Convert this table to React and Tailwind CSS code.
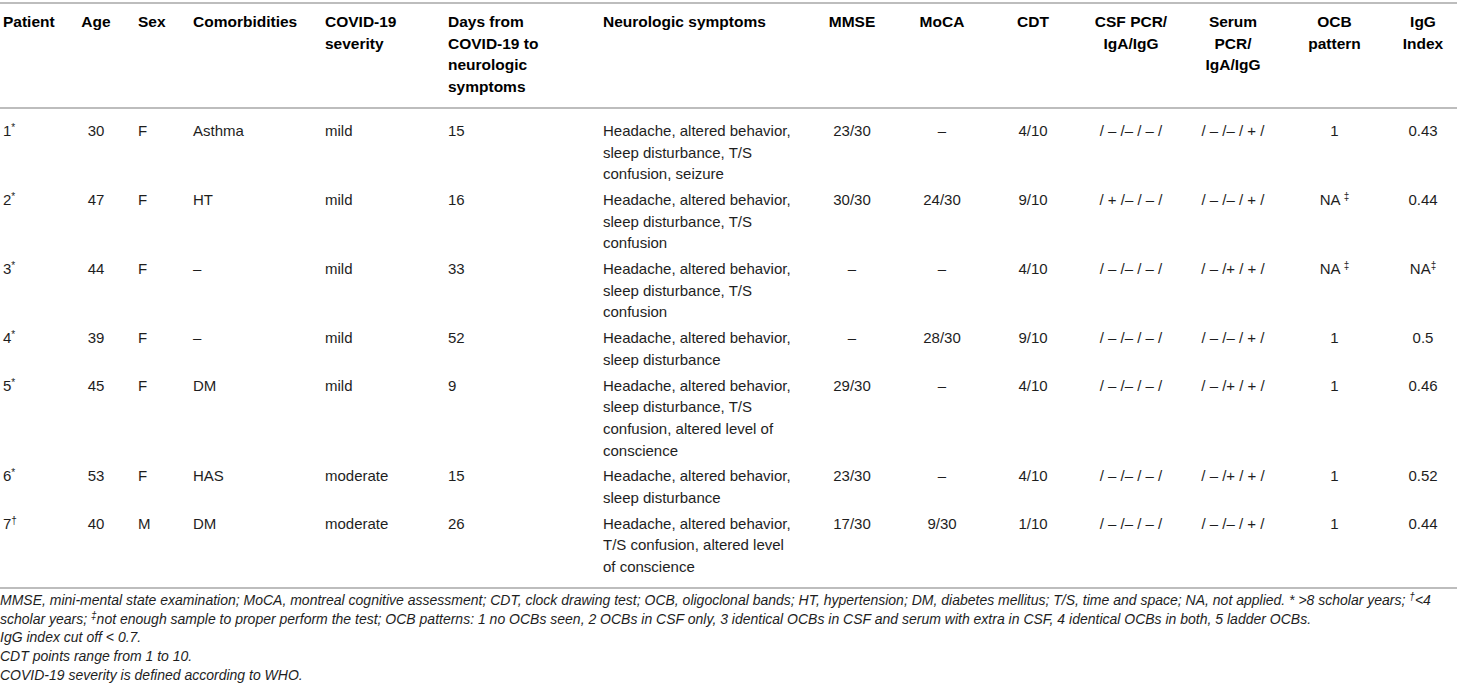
import React from "react";

const cols = [
  { w: "w-[57px]", align: "text-left" },
  { w: "w-[78px]", align: "text-center" },
  { w: "w-[55px]", align: "text-left" },
  { w: "w-[132px]", align: "text-left" },
  { w: "w-[123px]", align: "text-left" },
  { w: "w-[155px]", align: "text-left" },
  { w: "w-[210px]", align: "text-left" },
  { w: "w-[84px]", align: "text-center" },
  { w: "w-[96px]", align: "text-center" },
  { w: "w-[86px]", align: "text-center" },
  { w: "w-[110px]", align: "text-center" },
  { w: "w-[94px]", align: "text-center" },
  { w: "w-[109px]", align: "text-center" },
  { w: "w-[68px]", align: "text-center" },
];

const headers = [
  ["Patient"],
  ["Age"],
  ["Sex"],
  ["Comorbidities"],
  ["COVID-19", "severity"],
  ["Days from", "COVID-19 to", "neurologic", "symptoms"],
  ["Neurologic symptoms"],
  ["MMSE"],
  ["MoCA"],
  ["CDT"],
  ["CSF PCR/", "IgA/IgG"],
  ["Serum", "PCR/", "IgA/IgG"],
  ["OCB", "pattern"],
  ["IgG", "Index"],
];

const Sup = ({ children }) => (
  <span className="text-[10px] leading-none align-[5px]">{children}</span>
);

const rows = [
  {
    p: ["1", "*"], age: "30", sex: "F", com: "Asthma", sev: "mild", days: "15",
    neuro: ["Headache, altered behavior,", "sleep disturbance, T/S", "confusion, seizure"],
    mmse: "23/30", moca: "–", cdt: "4/10", csf: "/ – /– / – /", ser: "/ – /– / + /",
    ocb: "1", igg: "0.43",
  },
  {
    p: ["2", "*"], age: "47", sex: "F", com: "HT", sev: "mild", days: "16",
    neuro: ["Headache, altered behavior,", "sleep disturbance, T/S", "confusion"],
    mmse: "30/30", moca: "24/30", cdt: "9/10", csf: "/ + /– / – /", ser: "/ – /– / + /",
    ocb: <>NA <Sup>‡</Sup></>, igg: "0.44",
  },
  {
    p: ["3", "*"], age: "44", sex: "F", com: "–", sev: "mild", days: "33",
    neuro: ["Headache, altered behavior,", "sleep disturbance, T/S", "confusion"],
    mmse: "–", moca: "–", cdt: "4/10", csf: "/ – /– / – /", ser: "/ – /+ / + /",
    ocb: <>NA <Sup>‡</Sup></>, igg: <>NA<Sup>‡</Sup></>,
  },
  {
    p: ["4", "*"], age: "39", sex: "F", com: "–", sev: "mild", days: "52",
    neuro: ["Headache, altered behavior,", "sleep disturbance"],
    mmse: "–", moca: "28/30", cdt: "9/10", csf: "/ – /– / – /", ser: "/ – /– / + /",
    ocb: "1", igg: "0.5",
  },
  {
    p: ["5", "*"], age: "45", sex: "F", com: "DM", sev: "mild", days: "9",
    neuro: ["Headache, altered behavior,", "sleep disturbance, T/S", "confusion, altered level of", "conscience"],
    mmse: "29/30", moca: "–", cdt: "4/10", csf: "/ – /– / – /", ser: "/ – /+ / + /",
    ocb: "1", igg: "0.46",
  },
  {
    p: ["6", "*"], age: "53", sex: "F", com: "HAS", sev: "moderate", days: "15",
    neuro: ["Headache, altered behavior,", "sleep disturbance"],
    mmse: "23/30", moca: "–", cdt: "4/10", csf: "/ – /– / – /", ser: "/ – /+ / + /",
    ocb: "1", igg: "0.52",
  },
  {
    p: ["7", "†"], age: "40", sex: "M", com: "DM", sev: "moderate", days: "26",
    neuro: ["Headache, altered behavior,", "T/S confusion, altered level", "of conscience"],
    mmse: "17/30", moca: "9/30", cdt: "1/10", csf: "/ – /– / – /", ser: "/ – /– / + /",
    ocb: "1", igg: "0.44",
  },
];

export default function App() {
  return (
    <div
      className="w-[1457px] h-[697px] bg-white pt-[2px] overflow-hidden"
      style={{ fontFamily: '"Liberation Sans", Arial, Helvetica, sans-serif' }}
    >
      <table className="table-fixed w-[1457px] border-collapse text-[15px] leading-[21.7px] text-[#1e1e1e]">
        <colgroup>
          {cols.map((c, i) => (
            <col key={i} className={c.w} />
          ))}
        </colgroup>
        <thead>
          <tr className="border-t-2 border-b-2 border-[#bdbdbd]">
            {headers.map((h, i) => (
              <th
                key={i}
                className={`${cols[i].align} align-top font-bold text-[15.5px] text-black px-[3px] pt-[7px] pb-[9px] whitespace-nowrap`}
              >
                {h.map((line, j) => (
                  <div key={j}>{line}</div>
                ))}
              </th>
            ))}
          </tr>
        </thead>
        <tbody>
          {rows.map((r, ri) => {
            const first = ri === 0;
            const last = ri === rows.length - 1;
            const pad = first
              ? "pt-[11px] pb-[2px]"
              : last
              ? "pt-[2px] pb-[9px]"
              : "pt-[2px] pb-[2px]";
            const cells = [
              <>
                {r.p[0]}
                <Sup>{r.p[1]}</Sup>
              </>,
              r.age,
              r.sex,
              r.com,
              r.sev,
              r.days,
              r.neuro.map((l, k) => <div key={k}>{l}</div>),
              r.mmse,
              r.moca,
              r.cdt,
              r.csf,
              r.ser,
              r.ocb,
              r.igg,
            ];
            return (
              <tr key={ri} className={last ? "border-b-2 border-[#bdbdbd]" : ""}>
                {cells.map((c, ci) => (
                  <td
                    key={ci}
                    className={`${cols[ci].align} align-top px-[3px] ${pad} whitespace-nowrap`}
                  >
                    {c}
                  </td>
                ))}
              </tr>
            );
          })}
        </tbody>
      </table>
      <div className="pt-[2px] text-[14px] leading-[18.7px] italic text-[#1e1e1e]">
        <p>
          MMSE, mini-mental state examination; MoCA, montreal cognitive assessment; CDT, clock drawing
          test; OCB, oligoclonal bands; HT, hypertension; DM, diabetes mellitus; T/S, time and space; NA,
          not applied. * &gt;8 scholar years; <Sup>†</Sup>&lt;4 scholar years; <Sup>‡</Sup>not enough
          sample to proper perform the test; OCB patterns: 1 no OCBs seen, 2 OCBs in CSF only, 3 identical
          OCBs in CSF and serum with extra in CSF, 4 identical OCBs in both, 5 ladder OCBs.
        </p>
        <p>IgG index cut off &lt; 0.7.</p>
        <p>CDT points range from 1 to 10.</p>
        <p>COVID-19 severity is defined according to WHO.</p>
      </div>
    </div>
  );
}
